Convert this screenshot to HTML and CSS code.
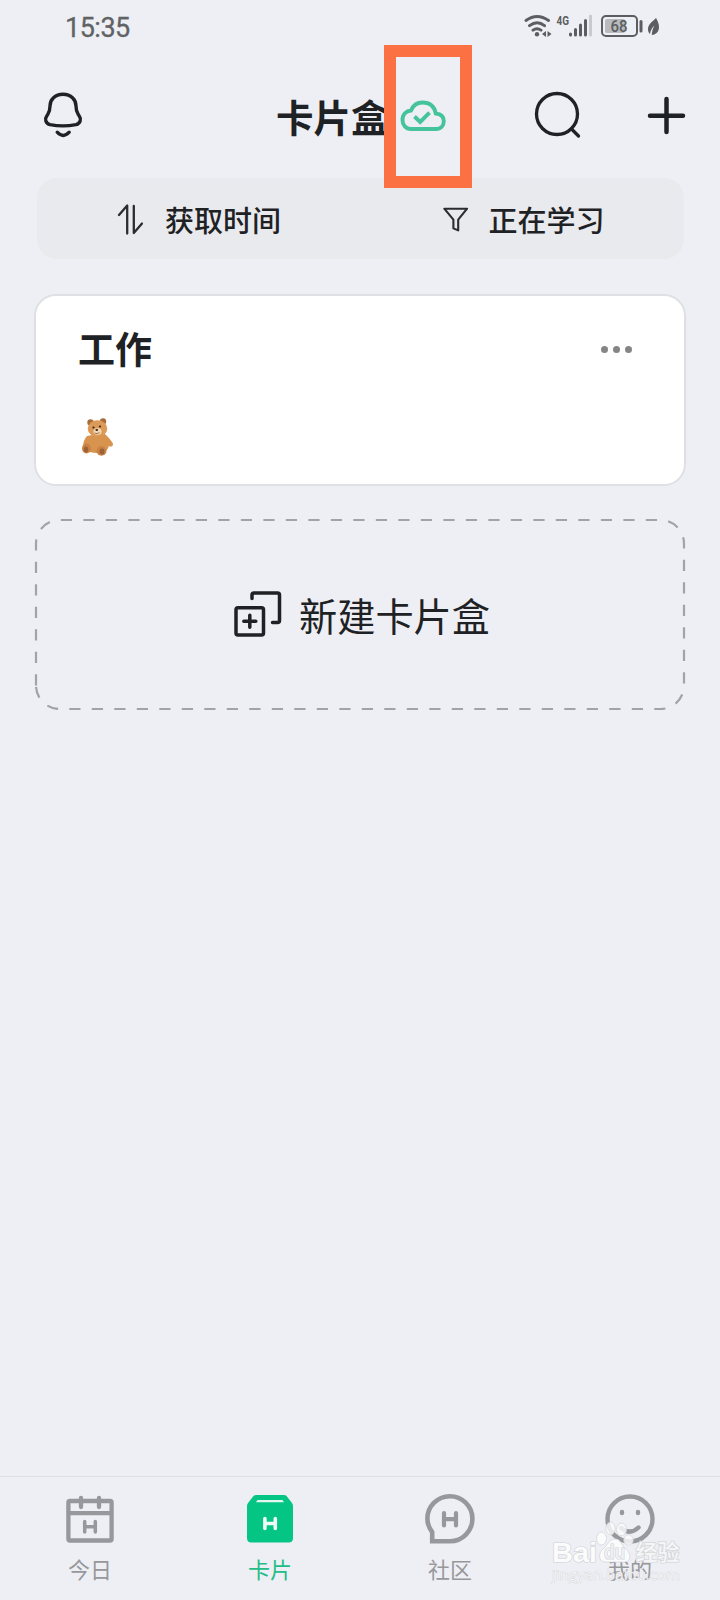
FILE: index.html
```html
<!DOCTYPE html>
<html lang="zh-CN">
<head>
<meta charset="utf-8">
<title>卡片盒</title>
<link rel="stylesheet" href="styles.css">
</head>
<body>
<div class="app">
  <div class="status">
    <span class="clock">15:35</span>
    <svg class="status-icons" width="140" height="28" viewBox="522 12 140 28">
      <g fill="none" stroke="#5b5d60" stroke-width="2.900" stroke-linecap="round">
        <path d="M526 20.500q11-8 22.500 0M529.500 25.700q7.800-6 15 0M533 30.200q4-3 8 0"/>
      </g>
      <circle cx="537" cy="34.300" r="2.200" fill="#5b5d60"/>
      <path d="M546 31v6l-4-3zM547.500 31v6l4-3z" fill="#5b5d60"/>
      <text class="net" x="556.500" y="24.700" textLength="12.500" lengthAdjust="spacingAndGlyphs">4G</text>
      <g stroke="#5b5d60" stroke-width="3" stroke-linecap="round">
        <path d="M570.500 34v1M575.500 29.500v5.500M580.500 25v10M585.500 20.500v14.500"/>
        <path d="M590.500 16v19" stroke="#c9cacd"/>
      </g>
      <rect x="602" y="16" width="35" height="20" rx="4" fill="none" stroke="#5b5d60" stroke-width="2"/>
      <rect x="605" y="19" width="20" height="14" rx="2" fill="#b9babd"/>
      <text class="level" x="610.500" y="32.300" textLength="17" lengthAdjust="spacingAndGlyphs">68</text>
      <path d="M641 21.500v9.500" stroke="#5b5d60" stroke-width="3" stroke-linecap="round"/>
      <path d="M656 18C652 22 648 24 648 29.500C648 31.500 649 33 650 34C650.500 30.500 652 27.500 654.500 25.500C652.700 28.500 652 31.500 651.800 35C657 34.500 659 31 659 27C659 23.500 657.500 20.500 656 18z" fill="#5b5d60"/>
    </svg>
  </div>

  <header class="header">
    <svg class="bell" width="40" height="48" viewBox="43 91 40 48" fill="none" stroke="#1f2225" stroke-width="3.400" stroke-linecap="round" stroke-linejoin="round">
      <path d="M63 94.200C55 94.200 50 99.500 50 106C50 112 49 112.500 47 115.500C44.500 119 45.500 123.500 50 124.700C57 126 69 126 76 124.700C80.500 123.500 81.500 119 79 115.500C77 112.500 76 112 76 106C76 99.500 71 94.200 63 94.200z"/>
      <path d="M57.200 132.200q6 6.500 12 0"/>
    </svg>
    <div class="heading">
      <h1 class="title">卡片盒</h1>
      <span class="sync">
        <svg width="46" height="32" viewBox="400 98 46 32" fill="none" stroke="#45c39b" stroke-width="3.900">
          <path d="M411 128C405.500 128 402.500 123.500 402.500 119C402.500 113.500 406 110 411 109.500C413 104.500 417 101.500 422.500 101.500C430 101.500 434.500 106 435.800 112.500C440.500 113 443.800 115.500 443.800 120C443.800 124.500 441 128 436 128z"/>
          <path d="M414.500 115.500l5.700 5.500l9.300-9.300"/>
        </svg>
        <i class="highlight"></i>
      </span>
    </div>
    <svg class="search" width="48" height="48" viewBox="534 91 48 48" fill="none" stroke="#1f2225" stroke-width="3.300" stroke-linecap="round">
      <circle cx="557" cy="114" r="20.500"/><path d="M571.500 129l7 7"/>
    </svg>
    <svg width="40" height="40" viewBox="646 96 40 40" stroke="#1f2225" stroke-width="4.500" stroke-linecap="round">
      <path d="M650 115.700h33M666.500 99v33"/>
    </svg>
  </header>

  <main class="content">
    <div class="filters">
      <div class="filter">
        <svg width="26" height="32" viewBox="117 203 26 32" fill="none" stroke="#2a2d30" stroke-width="2.300" stroke-linecap="round" stroke-linejoin="round">
          <path d="M119 215l8.200-9.500v28M133.800 206v27l8.200-9.500"/>
        </svg>
        <span>获取时间</span>
      </div>
      <div class="filter">
        <svg width="26" height="26" viewBox="443 206 26 26" fill="none" stroke="#2a2d30" stroke-width="2.100" stroke-linejoin="round">
          <path d="M444.300 208.700h22.800l-8.900 11v10.700l-4.800-2v-8.700z"/>
        </svg>
        <span>正在学习</span>
      </div>
    </div>

    <section class="card">
      <div class="card-head">
        <h2 class="card-title">工作</h2>
        <div class="more"><i></i><i></i><i></i></div>
      </div>
      <svg class="bear" width="34" height="40" viewBox="81 417 34 40">
        <g fill="#a86c3b"><circle cx="90.500" cy="422.500" r="3.200"/><circle cx="103" cy="421.500" r="3.200"/></g>
        <path d="M87 436C83 441 82 446 85 450C92 454 102 454 107 450L109 446C113 448 114 444 112 442C109 438 106 434 103 433z" fill="#d8944f"/>
        <ellipse cx="97.500" cy="428.500" rx="9.800" ry="8.300" fill="#dc9a58"/>
        <ellipse cx="97.500" cy="431.500" rx="4" ry="3.300" fill="#f4d9b4"/>
        <ellipse cx="86.500" cy="448.500" rx="4.500" ry="5" fill="#c98243"/>
        <ellipse cx="101.500" cy="451" rx="5" ry="4.700" fill="#c98243"/>
        <ellipse cx="86" cy="449.500" rx="2.200" ry="3" fill="#9c6238"/>
        <ellipse cx="102" cy="451.500" rx="2.400" ry="3" fill="#9c6238"/>
        <g fill="#3a2418"><circle cx="93.500" cy="427.500" r="1.100"/><circle cx="100" cy="426.500" r="1.100"/><ellipse cx="96.800" cy="430" rx="1.400" ry="1"/></g>
        <path d="M94.500 433q2.500 1.500 5-.5" fill="none" stroke="#8a5a3a" stroke-width=".8"/>
      </svg>
    </section>

    <div class="create">
      <svg class="dashes" width="652" height="192" fill="none" stroke="#a2a3a6" stroke-width="2.200">
        <path stroke-dasharray="11.250 11.250" d="M2 167.500V25.500A23.500 23.500 0 0 1 25.500 2H626.500A23.500 23.500 0 0 1 650 25.500V167.500A23.500 23.500 0 0 1 626.500 191H25.500A23.500 23.500 0 0 1 2 167.500"/>
      </svg>
      <svg width="48" height="48" viewBox="234 590 48 48" fill="none" stroke="#1f2225" stroke-width="3.500" stroke-linecap="round" stroke-linejoin="round">
        <rect x="236" y="607.700" width="27.500" height="27.300" rx="2"/>
        <path d="M243.800 621.200h12M249.800 615.200v12M252 598.500V595q0-2 2-2h23.500q2 0 2 2v25.500q0 2-2 2h-5"/>
      </svg>
      <span>新建卡片盒</span>
    </div>
  </main>

  <nav class="tabs">
    <div class="tab">
      <svg width="52" height="52" viewBox="64 1493 52 52" fill="none" stroke="#97989b" stroke-width="4.300" stroke-linecap="round" stroke-linejoin="round">
        <rect x="68.400" y="1501" width="43.200" height="39.500" rx="1.500"/>
        <path d="M69 1513.200h42M81 1498v9M99 1498v9" />
        <path stroke-width="3.500" d="M84.700 1521.500v10.500M95.300 1521.500v10.500M85 1526.700h10"/>
      </svg>
      <span>今日</span>
    </div>
    <div class="tab active">
      <svg width="52" height="52" viewBox="244 1493 52 52" fill="none" stroke="#eefaf5" stroke-linecap="round">
        <path d="M256 1495h28q1.500 0 2.500 1l5.500 7q1 1.500 1 3v32q0 4.500-4.500 4.500h-37q-4.500 0-4.500-4.500v-32q0-1.500 1-3l5.500-7q1-1 2.500-1z" fill="#04c584" stroke="none"/>
        <path d="M257.500 1500h25l1.500 2.200h-28z" fill="#e4f7ef" stroke="none"/>
        <path stroke-width="3.600" d="M264.900 1518.500v10M275.300 1518.500v10M265 1523.500h10"/>
      </svg>
      <span>卡片</span>
    </div>
    <div class="tab">
      <svg width="52" height="52" viewBox="424 1493 52 52" fill="none" stroke="#97989b" stroke-width="4.600" stroke-linecap="round">
        <path stroke-linecap="butt" d="M432.200 1541.200v-9C429.500 1528.500 427.400 1524 427.400 1519A22.500 22.500 0 1 1 450 1541.200z"/>
        <path stroke-width="4.200" d="M444 1513v12.500M456 1513v12.500M444 1519.200h12"/>
      </svg>
      <span>社区</span>
    </div>
    <div class="tab">
      <svg width="52" height="52" viewBox="604 1493 52 52" fill="none" stroke="#97989b" stroke-width="4.400" stroke-linecap="round">
        <circle cx="630" cy="1519" r="22.500"/>
        <path d="M622 1512v1M638 1512v1M621 1528q9 7.500 17.500-.5"/>
      </svg>
      <span>我的</span>
    </div>
    <svg class="watermark" width="140" height="64" viewBox="550 1520 140 64">
      <g fill="#fbfbfc" stroke="#d6d7da" stroke-width=".8">
        <ellipse cx="601.500" cy="1538.500" rx="5" ry="6.500"/>
        <ellipse cx="610.500" cy="1528.500" rx="4.700" ry="6.300" fill-opacity=".82"/>
        <ellipse cx="621.500" cy="1529.500" rx="5" ry="6.300" fill-opacity=".82"/>
        <ellipse cx="628.500" cy="1540" rx="4.700" ry="5.200" fill-opacity=".82"/>
        <path d="M615 1539C609 1539 608 1545 603 1549C598 1553 598 1562 606 1562H624C632 1562 631 1553 626 1549C621 1545 621 1539 615 1539z"/>
      </g>
      <g class="wm-text">
        <text class="wm-brand" x="552" y="1561.500" textLength="45" lengthAdjust="spacingAndGlyphs">Bai</text>
        <text class="wm-du" x="604" y="1559" textLength="21" lengthAdjust="spacingAndGlyphs">du</text>
        <text class="wm-cn" x="635.500" y="1560">经验</text>
        <text class="wm-url" x="552" y="1580" textLength="128" lengthAdjust="spacingAndGlyphs">jingyan.baidu.com</text>
      </g>
    </svg>
  </nav>
</div>
</body>
</html>
```

FILE: styles.css
```css
* { box-sizing: border-box; }
body { margin: 0; background: #eeeff4; }
svg { display: block; flex: none; }
.app {
  width: 720px;
  height: 1600px;
  display: flex;
  flex-direction: column;
  overflow: hidden;
  background: #eeeff4;
  color: #1f2225;
  font-family: "Noto Sans CJK SC", sans-serif;
}
.status {
  height: 52px;
  padding: 0 58px 0 65px;
  display: flex;
  justify-content: space-between;
  align-items: center;
}
.clock { font: 27px/52px Roboto, sans-serif; color: #606265; padding-top: 3px; letter-spacing: -.5px; -webkit-text-stroke: .3px #606265; }
.net { font: 700 13px Roboto, sans-serif; fill: #5b5d60; }
.level { font: 500 16px Roboto, sans-serif; fill: #5b5d60; }

.header { height: 126px; padding: 0 34px 1px 43px; display: flex; align-items: center; }
.heading { display: flex; align-items: center; margin-left: 193px; }
.title { margin: 0; width: 113px; font-size: 37.5px; line-height: 48px; font-weight: 700; padding-top: 2px; }
.sync { position: relative; margin-left: 11px; }
.highlight {
  position: absolute;
  left: -16px;
  top: -54px;
  width: 88px;
  height: 143px;
  border: 12px solid #fb7144;
}
.search { margin-left: 88px; }
.header > svg:last-child { margin: 2px 0 0 auto; }

.content { flex: 1; padding: 0 34px; }
.filters {
  margin: 0 2px 0 3px;
  height: 81px;
  border-radius: 20px;
  background: #e9eaed;
  display: grid;
  grid-template-columns: 1fr 1fr;
  font-size: 29px;
  font-weight: 500;
}
.filter { display: flex; align-items: center; gap: 22px; padding-left: 80px; }
.filter + .filter { gap: 20px; padding-left: 82px; }
.filter svg { margin-top: 1px; }

.card {
  margin-top: 35px;
  height: 192px;
  border: 2px solid #dfe0e3;
  border-radius: 22px;
  background: #fff;
  padding: 27px 52px 0 42px;
}
.card-head { display: flex; justify-content: space-between; align-items: center; height: 50px; }
.card-title { margin: 0; font-size: 37px; line-height: 50px; font-weight: 700; }
.more { display: flex; gap: 5px; padding-top: 2px; }
.more i { width: 7px; height: 7px; border-radius: 50%; background: #858585; }
.bear { margin: 44px 0 0 3px; }

.create {
  position: relative;
  margin-top: 32px;
  height: 192px;
  display: flex;
  align-items: center;
  gap: 17px;
  padding-left: 200px;
  font-size: 38.2px;
}
.dashes { position: absolute; left: 0; top: 0; }

.tabs {
  position: relative;
  height: 124px;
  border-top: 1px solid #dfe0e4;
  display: grid;
  grid-template-columns: repeat(4, 1fr);
}
.tab { display: flex; flex-direction: column; align-items: center; padding-top: 16px; color: #97989b; font-size: 22px; line-height: 32px; }
.tab span { margin-top: 7px; }
.active { color: #24bd88; }
.watermark { position: absolute; left: 550px; top: 43px; }
.wm-text { fill: #fbfbfc; stroke: #d0d1d5; stroke-width: 1.2px; paint-order: stroke; }
.wm-brand { font: 700 28px "Liberation Sans", sans-serif; }
.wm-du { font: 700 20px "Liberation Sans", sans-serif; fill: #eeeff4; }
.wm-cn { font: 700 22px "Noto Sans CJK SC", sans-serif; fill-opacity: .75; }
.wm-url { font: 15px "Open Sans", sans-serif; fill-opacity: .75; stroke-width: .7px; }
```
